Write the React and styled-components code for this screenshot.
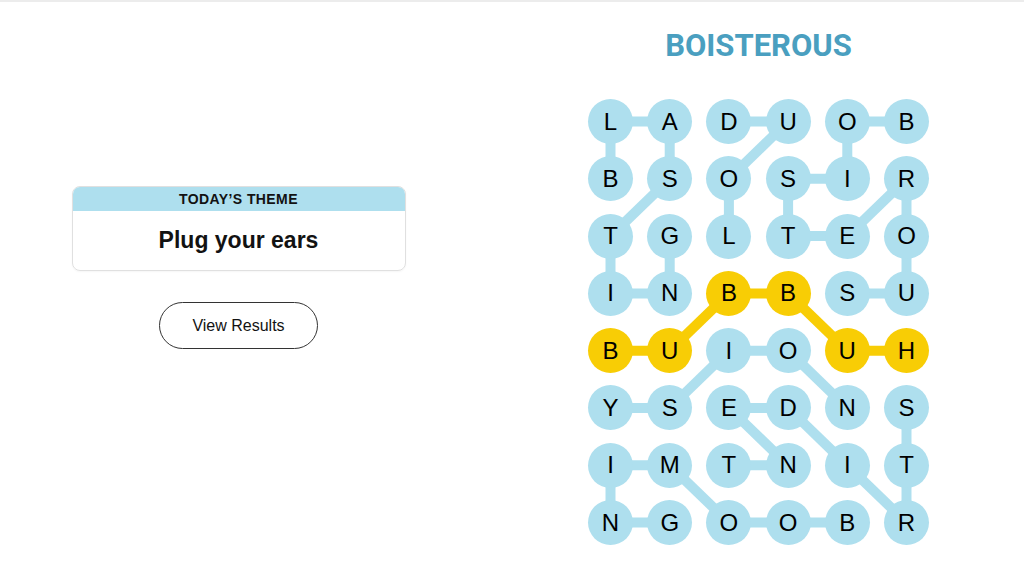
import React from "react";
import styled, { createGlobalStyle } from "styled-components";

const GRID = [
    "LADUOB",
    "BSOSIR",
    "TGLTEO",
    "INBBSU",
    "BUIOUH",
    "YSEDNS",
    "IMTNIT",
    "NGOOBR",
];

// cells of the spangram (HUBBUB)
const SPANGRAM = ["3-2", "3-3", "4-0", "4-1", "4-4", "4-5"];

const BLUE_LINKS = [
    [0, 0, 0, 1], [0, 2, 0, 3], [0, 4, 0, 5],
    [0, 0, 1, 0], [0, 1, 1, 1], [0, 3, 1, 2], [0, 4, 1, 4],
    [1, 3, 1, 4],
    [1, 1, 2, 0], [1, 2, 2, 2], [1, 3, 2, 3], [1, 5, 2, 4], [1, 5, 2, 5],
    [2, 3, 2, 4], [2, 0, 3, 0], [2, 1, 3, 1], [2, 5, 3, 5],
    [3, 0, 3, 1], [3, 4, 3, 5],
    [4, 2, 4, 3], [4, 2, 5, 1], [4, 3, 5, 4],
    [5, 0, 5, 1], [5, 2, 5, 3], [5, 5, 6, 5], [5, 2, 6, 3], [5, 3, 6, 4],
    [6, 0, 6, 1], [6, 2, 6, 3], [6, 4, 7, 5], [6, 5, 7, 5], [6, 0, 7, 0], [6, 1, 7, 2],
    [7, 0, 7, 1], [7, 2, 7, 3], [7, 3, 7, 4],
];

const YELLOW_LINKS = [
    [4, 0, 4, 1], [4, 1, 3, 2], [3, 2, 3, 3], [3, 3, 4, 4], [4, 4, 4, 5],
];

const CELL = 45;
const COL_STEP = 59.2;
const ROW_STEP = 57.3;

const COLOR = {
    blue: "#aedfee",
    yellow: "#f8cd05",
    title: "#4a9fc0",
    ink: "#121212",
};

const cx = (c) => CELL / 2 + c * COL_STEP;
const cy = (r) => CELL / 2 + r * ROW_STEP;

const App = () => {
    return (
        <>
            <GlobalStyle />
            <TopBar />
            <Main>
                <LeftPane>
                    <ThemeCard>
                        <ThemeHeader>TODAY’S THEME</ThemeHeader>
                        <ThemeBody>Plug your ears</ThemeBody>
                    </ThemeCard>
                    <ResultsButton type="button">View Results</ResultsButton>
                </LeftPane>
                <RightPane>
                    <WordTitle>BOISTEROUS</WordTitle>
                    <Board>
                        <Links
                            width={CELL + 5 * COL_STEP}
                            height={CELL + 7 * ROW_STEP}
                        >
                            {BLUE_LINKS.map(([r1, c1, r2, c2], idx) => (
                                <line
                                    key={`b${idx}`}
                                    x1={cx(c1)}
                                    y1={cy(r1)}
                                    x2={cx(c2)}
                                    y2={cy(r2)}
                                    stroke={COLOR.blue}
                                    strokeWidth="10"
                                />
                            ))}
                            {YELLOW_LINKS.map(([r1, c1, r2, c2], idx) => (
                                <line
                                    key={`y${idx}`}
                                    x1={cx(c1)}
                                    y1={cy(r1)}
                                    x2={cx(c2)}
                                    y2={cy(r2)}
                                    stroke={COLOR.yellow}
                                    strokeWidth="10"
                                />
                            ))}
                        </Links>
                        {GRID.map((row, r) =>
                            row.split("").map((letter, c) => (
                                <Letter
                                    key={`${r}-${c}`}
                                    $spangram={SPANGRAM.includes(`${r}-${c}`)}
                                >
                                    {letter}
                                </Letter>
                            ))
                        )}
                    </Board>
                </RightPane>
            </Main>
        </>
    );
};

const GlobalStyle = createGlobalStyle`
    html, body {
        margin: 0;
        padding: 0;
        background: #ffffff;
    }
    body {
        font-family: "Liberation Sans", Arial, sans-serif;
        color: ${COLOR.ink};
    }
    * {
        box-sizing: border-box;
    }
`;

const TopBar = styled.div`
    height: 2px;
    border-bottom: 2px solid #ececec;
`;

const Main = styled.main`
    display: flex;
    flex-direction: row;
    width: 1024px;
`;

const LeftPane = styled.section`
    width: 477px;
    display: flex;
    flex-direction: column;
    align-items: center;
    padding-top: 184px;
`;

const ThemeCard = styled.div`
    width: 334px;
    border: 1px solid #e0e0e0;
    border-radius: 8px;
    overflow: hidden;
    box-shadow: 0 1px 2px rgba(0, 0, 0, 0.04);
`;

const ThemeHeader = styled.div`
    height: 24px;
    line-height: 25px;
    background-color: ${COLOR.blue};
    text-align: center;
    font-size: 14px;
    font-weight: 700;
    letter-spacing: 0.4px;
    color: ${COLOR.ink};
`;

const ThemeBody = styled.div`
    height: 59px;
    display: flex;
    align-items: center;
    justify-content: center;
    font-size: 23px;
    font-weight: 700;
    color: ${COLOR.ink};
`;

const ResultsButton = styled.button`
    margin-top: 31px;
    width: 159px;
    height: 47px;
    border: 1px solid #333333;
    border-radius: 24px;
    background: #ffffff;
    font-family: "Liberation Sans", Arial, sans-serif;
    font-size: 16px;
    color: ${COLOR.ink};
    cursor: pointer;
`;

const RightPane = styled.section`
    padding-left: 110px;
    display: flex;
    flex-direction: column;
    align-items: center;
    width: ${110 + CELL + 5 * COL_STEP + 2}px;
`;

const WordTitle = styled.h1`
    margin: 28px 0 0;
    font-family: Roboto, "Liberation Sans", sans-serif;
    font-size: 31px;
    line-height: 31px;
    font-weight: 700;
    color: ${COLOR.title};
`;

const Board = styled.div`
    position: relative;
    margin-top: 38px;
    display: grid;
    grid-template-columns: repeat(6, ${CELL}px);
    grid-auto-rows: ${CELL}px;
    column-gap: ${COL_STEP - CELL}px;
    row-gap: ${ROW_STEP - CELL}px;
`;

const Links = styled.svg`
    position: absolute;
    left: 0;
    top: 0;
    z-index: 0;
`;

const Letter = styled.div`
    position: relative;
    z-index: 1;
    width: ${CELL}px;
    height: ${CELL}px;
    border-radius: 50%;
    background-color: ${({ $spangram }) =>
        $spangram ? COLOR.yellow : COLOR.blue};
    display: flex;
    align-items: center;
    justify-content: center;
    font-size: 24px;
    color: #000000;
    text-transform: uppercase;
`;

export default App;
